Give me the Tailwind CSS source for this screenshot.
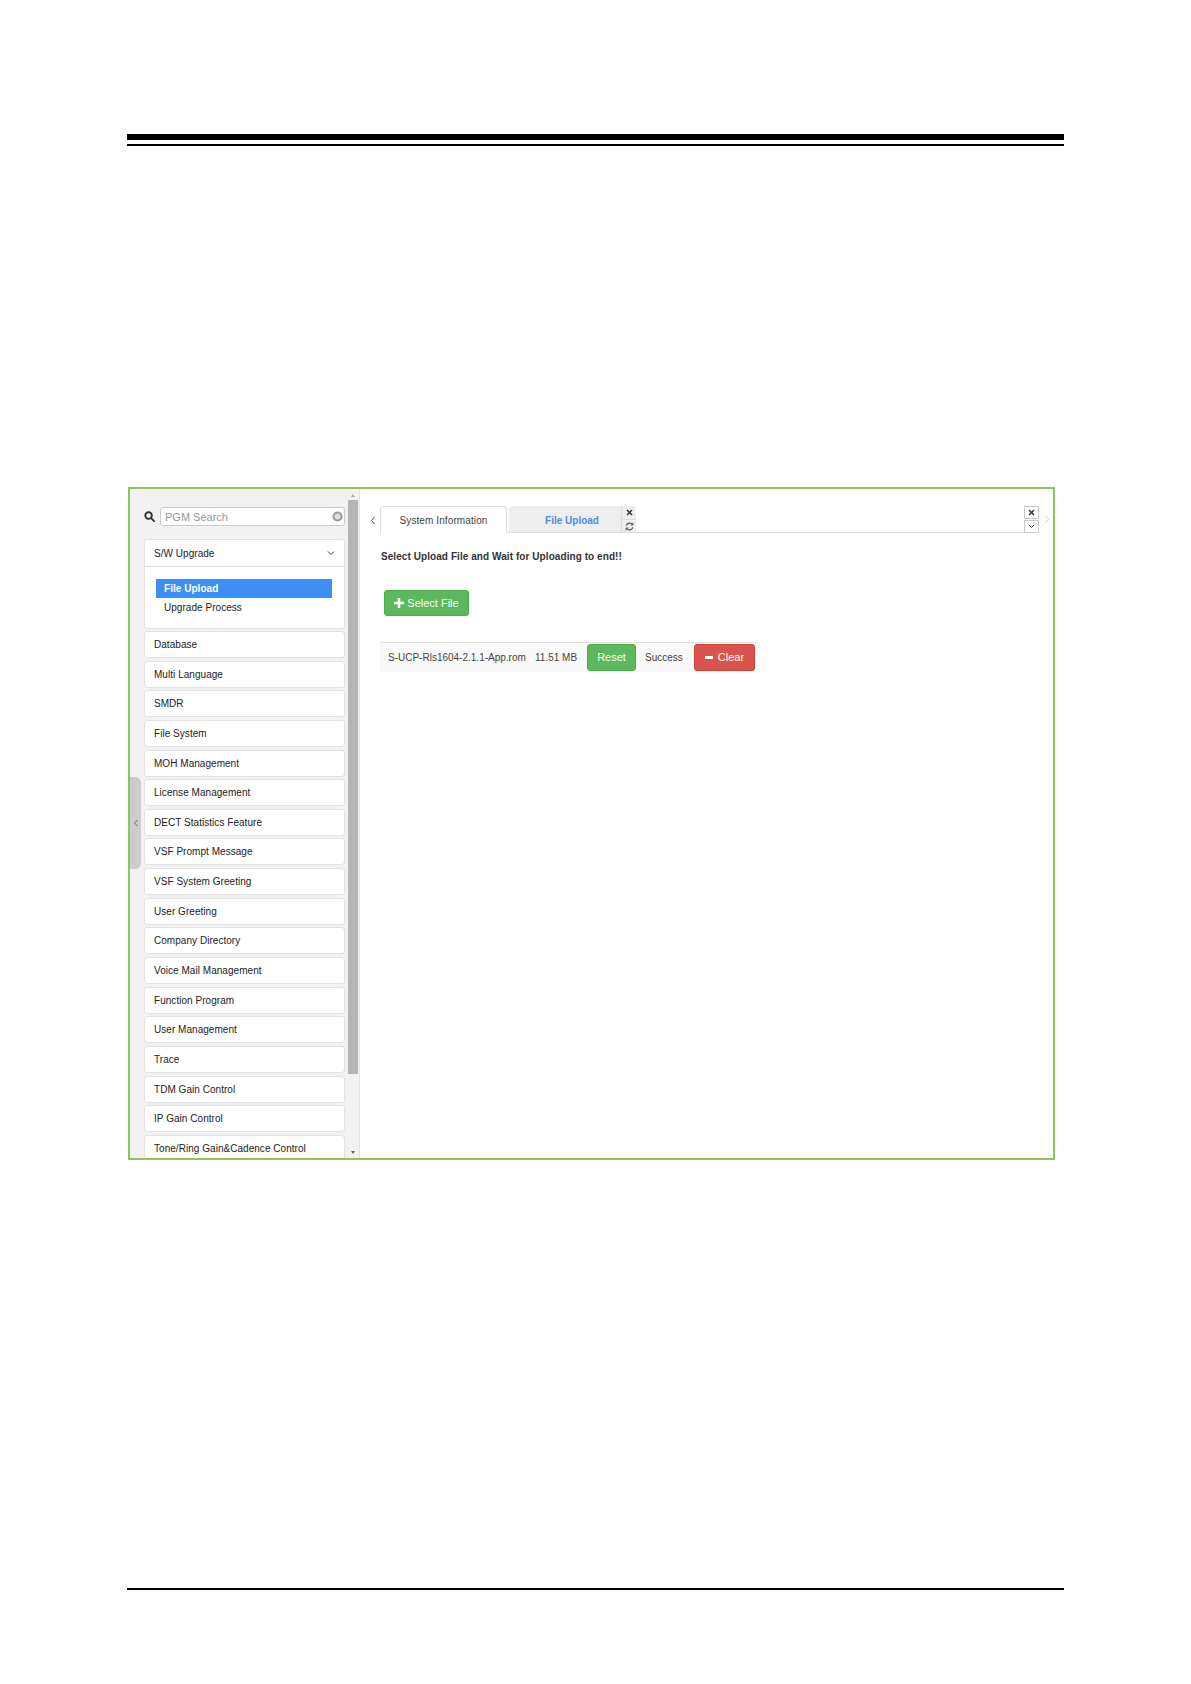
<!DOCTYPE html>
<html><head><meta charset="utf-8"><script src="https://cdn.jsdelivr.net/npm/@tailwindcss/browser@4"></script></head>
<body class="bg-white font-['Liberation_Sans',Arial,sans-serif] text-[#333] text-[10px]">
<div class="w-[1191px] h-[1684px] flex flex-col overflow-hidden">
  <div class="ml-[127px] mt-[134px] w-[937px] h-[6px] bg-black"></div>
  <div class="ml-[127px] mt-[4px] w-[937px] h-[2px] bg-black"></div>

  <div class="relative ml-[128px] mt-[341px] w-[927px] h-[673px] border-2 border-[#8dc45e] flex overflow-hidden">
    <!-- sidebar -->
    <aside class="relative w-[230px] h-full bg-[#f2f2f2] border-r border-[#e4e4e4] shrink-0 overflow-hidden">
      <div class="flex items-center pl-[14px] pt-[18px] w-[215px]">
        <svg class="w-[11px] h-[11px] shrink-0" viewBox="0 0 12 12" fill="none" stroke="#333" stroke-width="2"><circle cx="5" cy="5" r="3.6"/><path d="M7.8 7.8 11 11" stroke-linecap="round"/></svg>
        <div class="ml-[5px] flex-1 h-[19px] bg-white border border-[#ccc] rounded-[3px] flex items-center justify-between pl-[4px] pr-[1px]">
          <span class="text-[#999] text-[11px] pt-[1px]">PGM Search</span>
          <svg class="w-[11px] h-[11px]" viewBox="0 0 12 12"><circle cx="6" cy="6" r="4.4" fill="#dedede" stroke="#999" stroke-width="2.2"/></svg>
        </div>
      </div>
      <div class="ml-[14px] mt-[13px] w-[201px] flex flex-col tracking-[0.04px]">
        <section class="bg-white border border-[#e3e3e3] rounded-[3px] h-[90px] mb-[2px]">
          <div class="h-[27px] border-b border-[#ddd] flex items-center justify-between pl-[9px] pr-[9px]">
            <span class="text-[#222]">S/W Upgrade</span>
            <svg class="w-[8px] h-[8px]" viewBox="0 0 8 8" fill="none" stroke="#444" stroke-width="1"><path d="M1 2.5 4 5.5 7 2.5"/></svg>
          </div>
          <div class="pt-[12px] pl-[11px]">
            <div class="w-[176px] h-[19px] bg-[#3b8ff5] text-white font-bold pl-[8px] flex items-center">File Upload</div>
            <div class="h-[19px] pl-[8px] flex items-center text-[#222]">Upgrade Process</div>
          </div>
        </section>
        <div class="flex flex-col gap-[2.65px]">
          <div class="h-[27px] shrink-0 bg-white border border-[#e3e3e3] rounded-[3px] flex items-center pl-[9px] text-[#222]">Database</div>
          <div class="h-[27px] shrink-0 bg-white border border-[#e3e3e3] rounded-[3px] flex items-center pl-[9px] text-[#222]">Multi Language</div>
          <div class="h-[27px] shrink-0 bg-white border border-[#e3e3e3] rounded-[3px] flex items-center pl-[9px] text-[#222]">SMDR</div>
          <div class="h-[27px] shrink-0 bg-white border border-[#e3e3e3] rounded-[3px] flex items-center pl-[9px] text-[#222]">File System</div>
          <div class="h-[27px] shrink-0 bg-white border border-[#e3e3e3] rounded-[3px] flex items-center pl-[9px] text-[#222]">MOH Management</div>
          <div class="h-[27px] shrink-0 bg-white border border-[#e3e3e3] rounded-[3px] flex items-center pl-[9px] text-[#222]">License Management</div>
          <div class="h-[27px] shrink-0 bg-white border border-[#e3e3e3] rounded-[3px] flex items-center pl-[9px] text-[#222]">DECT Statistics Feature</div>
          <div class="h-[27px] shrink-0 bg-white border border-[#e3e3e3] rounded-[3px] flex items-center pl-[9px] text-[#222]">VSF Prompt Message</div>
          <div class="h-[27px] shrink-0 bg-white border border-[#e3e3e3] rounded-[3px] flex items-center pl-[9px] text-[#222]">VSF System Greeting</div>
          <div class="h-[27px] shrink-0 bg-white border border-[#e3e3e3] rounded-[3px] flex items-center pl-[9px] text-[#222]">User Greeting</div>
          <div class="h-[27px] shrink-0 bg-white border border-[#e3e3e3] rounded-[3px] flex items-center pl-[9px] text-[#222]">Company Directory</div>
          <div class="h-[27px] shrink-0 bg-white border border-[#e3e3e3] rounded-[3px] flex items-center pl-[9px] text-[#222]">Voice Mail Management</div>
          <div class="h-[27px] shrink-0 bg-white border border-[#e3e3e3] rounded-[3px] flex items-center pl-[9px] text-[#222]">Function Program</div>
          <div class="h-[27px] shrink-0 bg-white border border-[#e3e3e3] rounded-[3px] flex items-center pl-[9px] text-[#222]">User Management</div>
          <div class="h-[27px] shrink-0 bg-white border border-[#e3e3e3] rounded-[3px] flex items-center pl-[9px] text-[#222]">Trace</div>
          <div class="h-[27px] shrink-0 bg-white border border-[#e3e3e3] rounded-[3px] flex items-center pl-[9px] text-[#222]">TDM Gain Control</div>
          <div class="h-[27px] shrink-0 bg-white border border-[#e3e3e3] rounded-[3px] flex items-center pl-[9px] text-[#222]">IP Gain Control</div>
          <div class="h-[27px] shrink-0 bg-white border border-[#e3e3e3] rounded-[3px] flex items-center pl-[9px] text-[#222]">Tone/Ring Gain&amp;Cadence Control</div>
        </div>
      </div>
      <!-- scrollbar -->
      <div class="absolute right-0 top-0 bottom-0 w-[11px]">
        <div class="absolute left-[3px] top-[5px] w-0 h-0 border-x-[2.5px] border-x-transparent border-b-[3px] border-b-[#aaa]"></div>
        <div class="absolute left-0 top-[11px] w-[10px] h-[574px] bg-[#b5b5b5]"></div>
        <div class="absolute left-[3px] bottom-[4px] w-0 h-0 border-x-[2.5px] border-x-transparent border-t-[3px] border-t-[#666]"></div>
      </div>
      <!-- collapse handle -->
      <div class="absolute left-0 top-[288px] w-[11px] h-[92px] bg-[#cccccc] rounded-r-[6px] flex items-center justify-center">
        <svg class="w-[6px] h-[8px]" viewBox="0 0 6 8" fill="none" stroke="#666" stroke-width="1"><path d="M4.5 1 1.5 4 4.5 7"/></svg>
      </div>
    </aside>

    <!-- main -->
    <main class="flex-1 bg-white flex flex-col min-w-0">
      <div class="flex items-end pt-[17px] h-[44px] pr-[14px] relative">
        <div class="w-[20px] h-[26px] flex items-center justify-center shrink-0 pl-[6px]">
          <svg class="w-[6px] h-[9px]" viewBox="0 0 6 9" fill="none" stroke="#555" stroke-width="1"><path d="M4.5 1 1.5 4.5 4.5 8"/></svg>
        </div>
        <div class="flex-1 h-[27px] border-b border-[#ddd] flex items-stretch justify-between">
          <div class="flex items-stretch">
            <div class="w-[127px] h-[27px] pt-[1px] border border-[#ddd] border-b-white rounded-t-[4px] bg-white flex items-center justify-center text-[#444] tracking-[0.1px]">System Information</div>
            <div class="ml-[2px] w-[112px] h-[26px] pt-[2px] pl-[14px] bg-[#eeeeee] rounded-tl-[4px] flex items-center justify-center font-bold text-[#4a8fde]">File Upload</div>
            <div class="w-[15px] h-[26px] bg-[#eeeeee] border-l border-[#ddd] rounded-tr-[4px] flex flex-col">
              <div class="h-[14px] border-b border-[#ddd] flex items-center justify-center">
                <svg class="w-[7px] h-[7px]" viewBox="0 0 7 7" stroke="#333" stroke-width="1.5"><path d="M1 1 6 6M6 1 1 6"/></svg>
              </div>
              <div class="flex-1 flex items-center justify-center">
                <svg class="w-[9px] h-[9px]" viewBox="0 0 10 10" fill="none" stroke="#444" stroke-width="1.2"><path d="M1.3 4A4 4 0 0 1 8.3 2.8M8.7 6A4 4 0 0 1 1.7 7.2"/><path d="M8.8 0.8V3.3H6.3M1.2 9.2V6.7H3.7" stroke-width="1"/></svg>
              </div>
            </div>
          </div>
          <div class="flex flex-col gap-[1px] w-[15px] -mb-[1px]">
            <div class="h-[13px] bg-white border border-[#ccc] flex items-center justify-center">
              <svg class="w-[7px] h-[7px]" viewBox="0 0 7 7" stroke="#333" stroke-width="1.5"><path d="M1 1 6 6M6 1 1 6"/></svg>
            </div>
            <div class="h-[13px] bg-white border border-[#ccc] flex items-center justify-center">
              <svg class="w-[7px] h-[5px]" viewBox="0 0 7 5" fill="none" stroke="#444" stroke-width="1"><path d="M1 1 3.5 3.5 6 1"/></svg>
            </div>
          </div>
        </div>
        <div class="absolute right-[3px] top-[26px]">
          <svg class="w-[6px] h-[9px] block" viewBox="0 0 6 9" fill="none" stroke="#ccc" stroke-width="1"><path d="M1.5 1 4.5 4.5 1.5 8"/></svg>
        </div>
      </div>

      <div class="pl-[21px] pt-[17px] text-[#333] font-bold text-[10px] tracking-[0.07px] leading-[14px]">Select Upload File and Wait for Uploading to end!!</div>

      <div class="pl-[24px] mt-[26px]">
        <div class="w-[85px] h-[26px] bg-[#5cb85c] border border-[#4cae4c] rounded-[3px] text-white text-[11px] flex items-center justify-center gap-[3px]">
          <svg class="w-[10px] h-[10px]" viewBox="0 0 10 10" fill="#fff"><path d="M3.7 0h2.6v3.7H10v2.6H6.3V10H3.7V6.3H0V3.7h3.7z"/></svg>
          <span>Select File</span>
        </div>
      </div>

      <div class="ml-[20px] mt-[26px] w-[376px] h-[30px] bg-[#f9f9f9] border-t border-[#e2e2e2] flex items-center text-[#444] text-[10px] whitespace-nowrap">
        <span class="ml-[8px] w-[147px] shrink-0">S-UCP-Rls1604-2.1.1-App.rom</span>
        <span class="w-[52px] shrink-0">11.51 MB</span>
        <div class="w-[49px] h-[27px] shrink-0 bg-[#5cb85c] border border-[#4cae4c] rounded-[3px] text-white text-[11px] flex items-center justify-center">Reset</div>
        <span class="pl-[9px] w-[58px] shrink-0">Success</span>
        <div class="w-[61px] h-[27px] shrink-0 bg-[#d9534f] border border-[#d43f3a] rounded-[3px] text-white text-[11px] flex items-center justify-center gap-[5px]">
          <span class="block w-[8px] h-[3px] bg-white"></span><span>Clear</span>
        </div>
      </div>
    </main>
  </div>

  <div class="ml-[127px] mt-[428px] w-[937px] h-[1.5px] bg-black"></div>
</div>
</body></html>
